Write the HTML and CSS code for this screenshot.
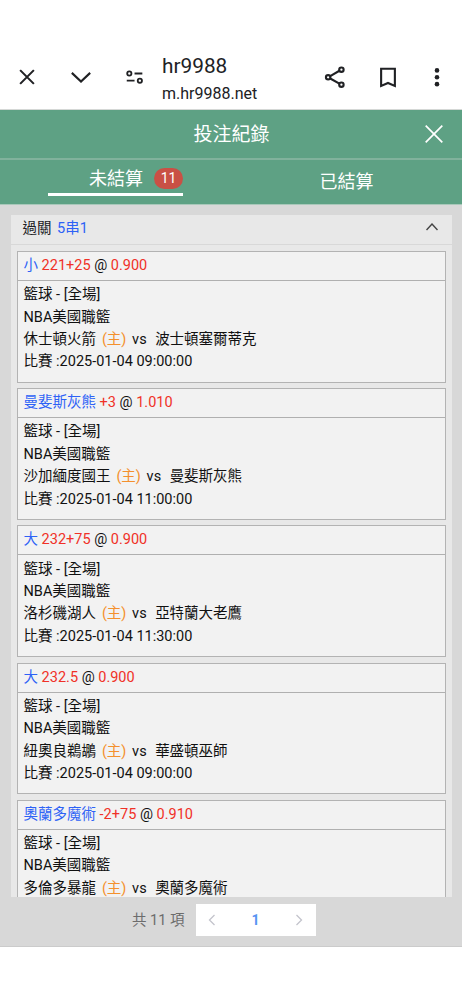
FILE: index.html
```html
<!DOCTYPE html>
<html lang="zh-Hant">
<head>
	<meta charset="UTF-8">
	<title>投注紀錄</title>
	<link rel="stylesheet" href="styles.css">
</head>
<body>
	<header class="browser">
		<svg class="icon" viewBox="0 0 24 24"><path d="M4.5 4.5l15 15M19.5 4.5l-15 15"/></svg>
		<svg class="icon" viewBox="0 0 24 24"><path d="M2 7.5l10 9.5 10-9.5"/></svg>
		<svg class="icon tune" viewBox="0 0 24 24"><circle cx="5.8" cy="8.2" r="2.3"/><path d="M11.5 8.2H20M3 16h8.5"/><circle cx="17.3" cy="16" r="2.3"/></svg>
		<div class="address">
			<div class="site">hr9988</div>
			<div class="url">m.hr9988.net</div>
		</div>
		<svg class="icon" viewBox="0 0 24 24"><circle cx="4.5" cy="12.3" r="2.4"/><circle cx="19" cy="4" r="2.4"/><circle cx="19" cy="20.4" r="2.4"/><path d="M6.8 11l10-5.8M6.8 13.6l10 5.6"/></svg>
		<svg class="icon" viewBox="0 0 24 24"><path d="M4.5 3h15v18.8L12 18.5l-7.5 3.3z"/></svg>
		<svg class="icon dots" viewBox="0 0 24 24"><circle cx="12" cy="4.8" r="2.5"/><circle cx="12" cy="12.3" r="2.5"/><circle cx="12" cy="19.8" r="2.5"/></svg>
	</header>

	<div class="title">
		<h1>投注紀錄</h1>
		<svg class="close" viewBox="0 0 18 18"><path d="M.7.7l16.6 16.6M17.3.7L.7 17.3"/></svg>
	</div>
	<nav class="tabs">
		<a class="tab active"><span>未結算</span><span class="count">11</span></a>
		<a class="tab"><span>已結算</span></a>
	</nav>

	<main>
		<section class="list">
			<div class="list-head">
				<span>過關 <span class="blue">5串1</span></span>
				<svg class="arrow" viewBox="0 0 12 8"><path d="M.5 7L6 1l5.5 6"/></svg>
			</div>

			<div class="bet">
				<div class="pick"><span class="blue">小</span> <span class="red">221+25</span> @ <span class="red">0.900</span></div>
				<div class="info">
					<div>籃球 - [全場]</div>
					<div>NBA美國職籃</div>
					<div>休士頓火箭 <span class="home">(主)</span><span class="vs">vs</span>波士頓塞爾蒂克</div>
					<div>比賽 :2025-01-04 09:00:00</div>
				</div>
			</div>

			<div class="bet">
				<div class="pick"><span class="blue">曼斐斯灰熊</span> <span class="red">+3</span> @ <span class="red">1.010</span></div>
				<div class="info">
					<div>籃球 - [全場]</div>
					<div>NBA美國職籃</div>
					<div>沙加緬度國王 <span class="home">(主)</span><span class="vs">vs</span>曼斐斯灰熊</div>
					<div>比賽 :2025-01-04 11:00:00</div>
				</div>
			</div>

			<div class="bet">
				<div class="pick"><span class="blue">大</span> <span class="red">232+75</span> @ <span class="red">0.900</span></div>
				<div class="info">
					<div>籃球 - [全場]</div>
					<div>NBA美國職籃</div>
					<div>洛杉磯湖人 <span class="home">(主)</span><span class="vs">vs</span>亞特蘭大老鷹</div>
					<div>比賽 :2025-01-04 11:30:00</div>
				</div>
			</div>

			<div class="bet">
				<div class="pick"><span class="blue">大</span> <span class="red">232.5</span> @ <span class="red">0.900</span></div>
				<div class="info">
					<div>籃球 - [全場]</div>
					<div>NBA美國職籃</div>
					<div>紐奧良鵜鶘 <span class="home">(主)</span><span class="vs">vs</span>華盛頓巫師</div>
					<div>比賽 :2025-01-04 09:00:00</div>
				</div>
			</div>

			<div class="bet">
				<div class="pick"><span class="blue">奧蘭多魔術</span> <span class="red">-2+75</span> @ <span class="red">0.910</span></div>
				<div class="info">
					<div>籃球 - [全場]</div>
					<div>NBA美國職籃</div>
					<div>多倫多暴龍 <span class="home">(主)</span><span class="vs">vs</span>奧蘭多魔術</div>
				</div>
			</div>
		</section>

		<footer class="pagination">
			<span class="total">共 11 項</span>
			<div class="pager">
				<svg viewBox="0 0 8 12"><path d="M6.5 1L1.5 6l5 5"/></svg>
				<b>1</b>
				<svg viewBox="0 0 8 12"><path d="M1.5 1l5 5-5 5"/></svg>
			</div>
		</footer>
	</main>
</body>
</html>
```
FILE: styles.css
```css
* { box-sizing: border-box; }
body {
	margin: 0;
	height: 1000px;
	background: #fff;
	color: #202124;
	font-family: Roboto, "Noto Sans CJK TC", sans-serif;
	font-size: 14.5px;
	overflow: hidden;
}
svg { fill: none; flex: none; }

/* browser bar */
.browser {
	display: grid;
	grid-template-columns: 54px 54px 54px 146px 54px 52px 45px;
	align-items: center;
	justify-items: center;
	height: 110px;
	padding-top: 45px;
	border-bottom: 1px solid #d5d8d6;
}
.icon {
	width: 22px;
	height: 22px;
	stroke: #202124;
	stroke-width: 2.3;
}
.tune { stroke-width: 2; }
.dots { fill: #202124; stroke: none; }
.address {
	justify-self: start;
	padding-top: 4px;
}
.site {
	font-size: 20.8px;
	line-height: 28px;
}
.url {
	font-size: 16px;
	line-height: 27px;
}

/* title and tabs */
.title, .tabs {
	background: #5ea184;
	color: #fff;
}
.title {
	display: grid;
	grid-template-columns: 57px 1fr 57px;
	align-items: center;
	justify-items: center;
	height: 50px;
	padding-bottom: 1px;
	border-bottom: 2px solid #81b29c;
}
h1 {
	grid-column: 2;
	margin: -3px 0 0 1px;
	font-size: 19px;
	font-weight: normal;
}
.close {
	width: 18px;
	height: 18px;
	stroke: #fff;
	stroke-width: 1.7;
}
.tabs {
	display: flex;
	justify-content: space-between;
	height: 45px;
	padding: 0 48px;
	font-size: 18px;
	border-bottom: 1px solid #a9c8ba;
}
.tab {
	display: flex;
	align-items: center;
	justify-content: center;
	width: 135px;
	height: 40px;
}
.tab.active {
	justify-content: flex-end;
	gap: 11px;
	height: 36px;
	border-bottom: 3px solid #fff;
}
.count {
	width: 29px;
	height: 21px;
	margin-top: 3px;
	border-radius: 11px;
	background: #c95045;
	font-size: 14px;
	line-height: 21px;
	text-align: center;
}

/* bets */
main {
	height: 742px;
	padding: 10px 10px 0 11px;
	background: #d8d8d8;
	border-bottom: 1px solid #cbcbcb;
}
.list {
	height: 681.5px;
	overflow: hidden;
	background: #e8e8e8;
}
.list-head {
	display: flex;
	align-items: center;
	justify-content: space-between;
	height: 30px;
	padding: 0 14px 6px 11.5px;
	border-bottom: 1px solid #d8d8d8;
}
.list-head .blue { margin-left: 2px; }
.arrow {
	width: 12px;
	height: 8px;
	stroke: #444;
	stroke-width: 1.4;
}
.bet {
	height: 131.7px;
	margin: 6px 6px 5.5px 5.5px;
	border: 1px solid #b3b3b3;
	background: #f2f2f2;
	color: #111;
}
.bet + .bet { margin-top: 0; }
.pick {
	height: 29px;
	padding-left: 6px;
	border-bottom: 1px solid #b0b0b0;
	line-height: 28px;
}
.info {
	padding: 3.2px 6px;
	line-height: 22.4px;
}
.blue { color: #2e62f6; }
.red { color: #f03127; }
.home { margin-left: 2.3px; color: #f4902d; }
.vs { margin: 0 8.5px 0 5.7px; }

/* pagination */
.pagination {
	display: flex;
	align-items: center;
	gap: 11px;
	height: 47px;
	padding-left: 121px;
	color: #6c6c6c;
}
.total { margin-top: -3px; }
.pager {
	display: flex;
	align-items: center;
	justify-content: space-between;
	width: 120px;
	height: 32px;
	padding: 0 12px 1px;
	background: #fff;
}
.pager svg {
	width: 8px;
	height: 12px;
	stroke: #c3c4cc;
	stroke-width: 1.3;
}
.pager b { color: #5794f2; font-size: 14px; }
```
